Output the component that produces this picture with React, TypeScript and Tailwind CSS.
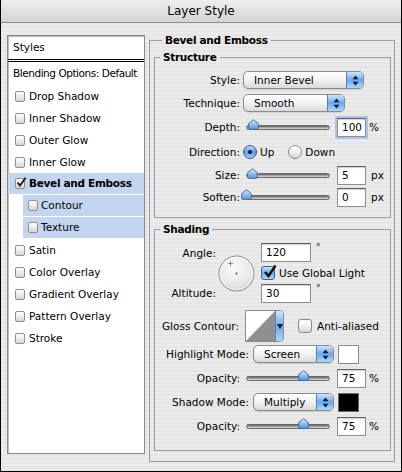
import React from "react";

const LIST = [
  { label: "Drop Shadow" },
  { label: "Inner Shadow" },
  { label: "Outer Glow" },
  { label: "Inner Glow" },
  { label: "Bevel and Emboss", checked: true, selected: true },
  { label: "Contour", sub: true, selected: true },
  { label: "Texture", sub: true, selected: true },
  { label: "Satin" },
  { label: "Color Overlay" },
  { label: "Gradient Overlay" },
  { label: "Pattern Overlay" },
  { label: "Stroke" },
];

function ListBox({ checked }: { checked?: boolean }) {
  return (
    <span className="relative block h-[11px] w-[10px] shrink-0 rounded-[2px] border border-[#8f8f8f] bg-linear-to-b from-white to-[#d6d6d6]">
      {checked && (
        <svg className="absolute -top-[2px] left-0" width="11" height="11" viewBox="0 0 11 11">
          <path d="M1.6 5.6 L4 8.6 L9.6 0.8" fill="none" stroke="#161616" strokeWidth="1.8" />
        </svg>
      )}
    </span>
  );
}

function AquaBox({ checked }: { checked?: boolean }) {
  return (
    <span
      className={
        checked
          ? "relative block h-[14px] w-[14px] shrink-0 rounded-[3px] border border-[#3d5f93] bg-linear-to-b from-[#cfe2f9] via-[#6ea8ee] to-[#a9d5fb]"
          : "relative block h-[14px] w-[14px] shrink-0 rounded-[3px] border border-[#8a8a8a] bg-linear-to-b from-white via-[#f1f1f1] to-[#d6d6d6]"
      }
    >
      {checked && (
        <svg className="absolute -top-[3px] left-[1px]" width="14" height="15" viewBox="0 0 14 15">
          <path d="M2 8 L5.5 12 L12.5 1.5" fill="none" stroke="#0b0b0b" strokeWidth="2.3" />
        </svg>
      )}
    </span>
  );
}

function Radio({ on }: { on?: boolean }) {
  return on ? (
    <span className="flex h-[14px] w-[14px] shrink-0 items-center justify-center rounded-full border border-[#2f568f] bg-linear-to-b from-[#c3dcf8] via-[#5b9ae8] to-[#a3d2fb]">
      <span className="block h-[4px] w-[4px] rounded-full bg-[#0c1b33]" />
    </span>
  ) : (
    <span className="block h-[14px] w-[14px] shrink-0 rounded-full border border-[#8a8a8a] bg-linear-to-b from-white via-[#efefef] to-[#d3d3d3]" />
  );
}

function Popup({ label, className }: { label: string; className: string }) {
  return (
    <div
      className={`flex h-[18px] shrink-0 overflow-hidden rounded-[5px] border border-[#8a8a8a] bg-linear-to-b from-white via-[#f2f2f2] to-[#dadada] shadow-[0_1px_1px_rgba(0,0,0,0.12)] ${className}`}
    >
      <span className="flex flex-1 items-center pl-[10px]">{label}</span>
      <span className="flex h-full w-[17px] items-center justify-center border-l border-[#5d80b4] bg-linear-to-b from-[#d2e5fb] via-[#6ea7ec] to-[#acd6fc]">
        <svg width="7" height="11" viewBox="0 0 7 11">
          <path d="M3.5 0.5 L6.5 4.2 H0.5 Z M3.5 10.5 L6.5 6.8 H0.5 Z" fill="#0d1a33" />
        </svg>
      </span>
    </div>
  );
}

function Slider({ at }: { at: number }) {
  return (
    <div className="relative flex h-[14px] w-[90px] shrink-0 items-center px-[3px]">
      <div className="h-[5px] w-full rounded-full border border-[#6b6b6b] bg-linear-to-b from-[#5a5a5a] via-[#a5a5a5] to-[#dcdcdc]" />
      <svg className="absolute top-[-1px]" style={{ left: 3 + at - 5.5 }} width="11" height="11" viewBox="0 0 11 11">
        <defs>
          <linearGradient id="thumbFill" x1="0" y1="0" x2="0" y2="1">
            <stop offset="0" stopColor="#e3efff" />
            <stop offset="0.55" stopColor="#8db9ee" />
            <stop offset="1" stopColor="#5f96dc" />
          </linearGradient>
        </defs>
        <path d="M5.5 0.7 L10.3 4.6 V9 Q10.3 10.3 9 10.3 H2 Q0.7 10.3 0.7 9 V4.6 Z" fill="url(#thumbFill)" stroke="#456a9e" strokeWidth="1" />
      </svg>
    </div>
  );
}

function Field({ value, className, focus }: { value: string; className: string; focus?: boolean }) {
  return (
    <div
      className={`flex h-[19px] shrink-0 items-center border border-[#8e8e8e] border-t-[#5f5f5f] bg-white pl-[4px] shadow-[inset_0_1px_1px_rgba(0,0,0,0.18)] ${
        focus ? "outline-2 outline-[#a9c6ea]" : ""
      } ${className}`}
    >
      {value}
    </div>
  );
}

function Dial() {
  return (
    <svg width="37" height="37" viewBox="0 0 37 37" className="shrink-0">
      <defs>
        <radialGradient id="dialFill" cx="0.45" cy="0.35" r="0.7">
          <stop offset="0" stopColor="#fbfbfb" />
          <stop offset="0.7" stopColor="#e6e6e6" />
          <stop offset="1" stopColor="#cfcfcf" />
        </radialGradient>
      </defs>
      <circle cx="18.5" cy="18.5" r="17.5" fill="url(#dialFill)" stroke="#8b8b8b" />
      <circle cx="18.5" cy="18.5" r="16.3" fill="none" stroke="#ffffff" strokeOpacity="0.8" />
      <path d="M12.5 5.5 V11.5 M9.5 8.5 H15.5" stroke="#ffffff" strokeWidth="2.2" />
      <path d="M12.5 6 V11 M10 8.5 H15" stroke="#7a7a7a" strokeWidth="0.9" />
      <rect x="17.5" y="17.5" width="2" height="2" fill="#6c6c6c" />
    </svg>
  );
}

function ContourPicker() {
  return (
    <div className="flex h-[32px] w-[39px] shrink-0 overflow-hidden rounded-r-[4px] border border-[#8a8a8a] bg-white">
      <svg width="29" height="30" viewBox="0 0 29 30" className="shrink-0">
        <rect width="29" height="30" fill="#ffffff" />
        <polygon points="0,30 29,0 29,30" fill="#8f8f8f" />
      </svg>
      <span className="flex flex-1 items-center justify-center border-l border-[#5d80b4] bg-linear-to-b from-[#d2e5fb] via-[#6ea7ec] to-[#acd6fc]">
        <svg width="6" height="5" viewBox="0 0 6 5">
          <path d="M0 0 H6 L3 5 Z" fill="#0d1a33" />
        </svg>
      </span>
    </div>
  );
}

function StylesList() {
  return (
    <div className="mt-[1px] flex h-[419px] w-[138px] shrink-0 flex-col border border-[#8a8a8a] bg-white shadow-[inset_1px_1px_0_#bdbdbd]">
      <div className="flex h-[23px] items-center pl-[5px]">Styles</div>
      <div className="h-[3px] border-b-[3px] border-double border-black" />
      <div className="flex h-[23px] items-center pl-[5px] tracking-[-0.45px] whitespace-nowrap">
        Blending Options: Default
      </div>
      {LIST.map((it) =>
        it.sub ? (
          <div key={it.label} className="flex h-[22px]">
            <div className="ml-[15px] flex flex-1 items-center gap-[3px] border-b border-transparent bg-[#c4d6ef] bg-clip-padding pl-[5px]">
              <ListBox />
              <span>{it.label}</span>
            </div>
          </div>
        ) : (
          <div
            key={it.label}
            className={
              it.selected
                ? "flex h-[22px] items-center gap-[4px] border-b border-transparent bg-[#c4d6ef] bg-clip-padding pl-[7px] font-bold tracking-[-0.3px]"
                : "flex h-[22px] items-center gap-[4px] pl-[7px]"
            }
          >
            <ListBox checked={it.checked} />
            <span>{it.label}</span>
          </div>
        )
      )}
    </div>
  );
}

function Structure() {
  return (
    <fieldset className="m-0 mt-[4px] min-w-0 border border-[#9b9b9b] p-0 pt-[5px] pb-[9px]">
      <legend className="ml-[5px] px-[3px] font-bold leading-[13px] tracking-[-0.3px]">Structure</legend>
      <div className="flex h-[22px] items-center">
        <span className="w-[85px] shrink-0 text-right">Style:</span>
        <Popup label="Inner Bevel" className="ml-[3px] w-[121px]" />
      </div>
      <div className="flex h-[24px] items-center">
        <span className="w-[85px] shrink-0 text-right">Technique:</span>
        <Popup label="Smooth" className="ml-[3px] w-[102px]" />
      </div>
      <div className="flex h-[24px] items-center">
        <span className="w-[85px] shrink-0 text-right">Depth:</span>
        <span className="ml-[3px] flex">
          <Slider at={7} />
        </span>
        <Field value="100" focus className="ml-[4px] w-[29px]" />
        <span className="ml-[3px]">%</span>
      </div>
      <div className="flex h-[26px] items-center">
        <span className="w-[85px] shrink-0 text-right">Direction:</span>
        <span className="ml-[3px] flex">
          <Radio on />
        </span>
        <span className="ml-[3px]">Up</span>
        <span className="ml-[14px] flex">
          <Radio />
        </span>
        <span className="ml-[3px]">Down</span>
      </div>
      <div className="flex h-[21px] items-center">
        <span className="w-[85px] shrink-0 text-right">Size:</span>
        <span className="ml-[3px] flex">
          <Slider at={6} />
        </span>
        <Field value="5" className="ml-[4px] w-[29px]" />
        <span className="ml-[5px]">px</span>
      </div>
      <div className="flex h-[22px] items-center">
        <span className="w-[85px] shrink-0 text-right">Soften:</span>
        <span className="ml-[3px] flex">
          <Slider at={0} />
        </span>
        <Field value="0" className="ml-[4px] w-[29px]" />
        <span className="ml-[5px]">px</span>
      </div>
    </fieldset>
  );
}

function Shading() {
  return (
    <fieldset className="m-0 mt-[5px] min-w-0 border border-[#9b9b9b] p-0 pt-[7px] pb-[12px]">
      <legend className="ml-[5px] px-[3px] font-bold leading-[13px] tracking-[-0.3px]">Shading</legend>
      <div className="flex h-[60px] items-center">
        <div className="flex h-full w-[61px] shrink-0 flex-col justify-between">
          <span className="flex h-[20px] items-center justify-end">Angle:</span>
          <span className="flex h-[20px] items-center justify-end">Altitude:</span>
        </div>
        <span className="ml-[2px] flex">
          <Dial />
        </span>
        <div className="ml-[6px] flex h-full flex-col justify-between">
          <div className="flex h-[20px] items-start">
            <Field value="120" className="w-[50px]" />
            <span className="ml-[5px] text-[9px]">°</span>
          </div>
          <div className="flex h-[18px] items-center gap-[4px]">
            <AquaBox checked />
            <span>Use Global Light</span>
          </div>
          <div className="flex h-[20px] items-end">
            <Field value="30" className="w-[50px]" />
            <span className="ml-[5px] self-start pt-[1px] text-[9px]">°</span>
          </div>
        </div>
      </div>
      <div className="mt-[7px] flex h-[32px] items-center">
        <span className="w-[84px] shrink-0 text-right">Gloss Contour:</span>
        <span className="ml-[6px] flex">
          <ContourPicker />
        </span>
        <span className="ml-[14px] flex">
          <AquaBox />
        </span>
        <span className="ml-[5px]">Anti-aliased</span>
      </div>
      <div className="flex h-[24px] items-center">
        <span className="w-[94px] shrink-0 text-right">Highlight Mode:</span>
        <Popup label="Screen" className="ml-[4px] w-[81px]" />
        <span className="ml-[4px] block h-[19px] w-[21px] border border-[#8a8a8a] bg-white" />
      </div>
      <div className="flex h-[24px] items-center">
        <span className="w-[85px] shrink-0 text-right">Opacity:</span>
        <span className="ml-[3px] flex">
          <Slider at={57} />
        </span>
        <Field value="75" className="ml-[4px] w-[29px]" />
        <span className="ml-[3px]">%</span>
      </div>
      <div className="flex h-[24px] items-center">
        <span className="w-[94px] shrink-0 text-right">Shadow Mode:</span>
        <Popup label="Multiply" className="ml-[4px] w-[81px]" />
        <span className="ml-[4px] block h-[19px] w-[21px] border border-[#6a6a6a] bg-black" />
      </div>
      <div className="flex h-[24px] items-center">
        <span className="w-[85px] shrink-0 text-right">Opacity:</span>
        <span className="ml-[3px] flex">
          <Slider at={57} />
        </span>
        <Field value="75" className="ml-[4px] w-[29px]" />
        <span className="ml-[3px]">%</span>
      </div>
    </fieldset>
  );
}

export default function App() {
  return (
    <div className="flex h-[472px] w-[402px] flex-col overflow-hidden border-x border-b border-black bg-[repeating-linear-gradient(180deg,#ebebeb_0px,#ebebeb_2px,#e5e5e5_2px,#e5e5e5_4px)] font-['DejaVu_Sans','Noto_Sans',sans-serif] text-[10.5px] leading-none text-black">
      <div className="flex h-[23px] shrink-0 items-center justify-center border-b border-[#8e8e8e] bg-linear-to-b from-[#eeeeee] to-[#d4d4d4] text-[12px]">
        Layer Style
      </div>
      <div className="flex items-start gap-[4px] px-[6px] pt-[11px]">
        <StylesList />
        <fieldset className="m-0 h-[428px] w-[246px] min-w-0 shrink-0 border border-[#9b9b9b] p-0 pr-[3px] pl-[4px]">
          <legend className="ml-[8px] px-[3px] font-bold leading-[13px] tracking-[-0.3px]">Bevel and Emboss</legend>
          <Structure />
          <Shading />
        </fieldset>
      </div>
    </div>
  );
}
